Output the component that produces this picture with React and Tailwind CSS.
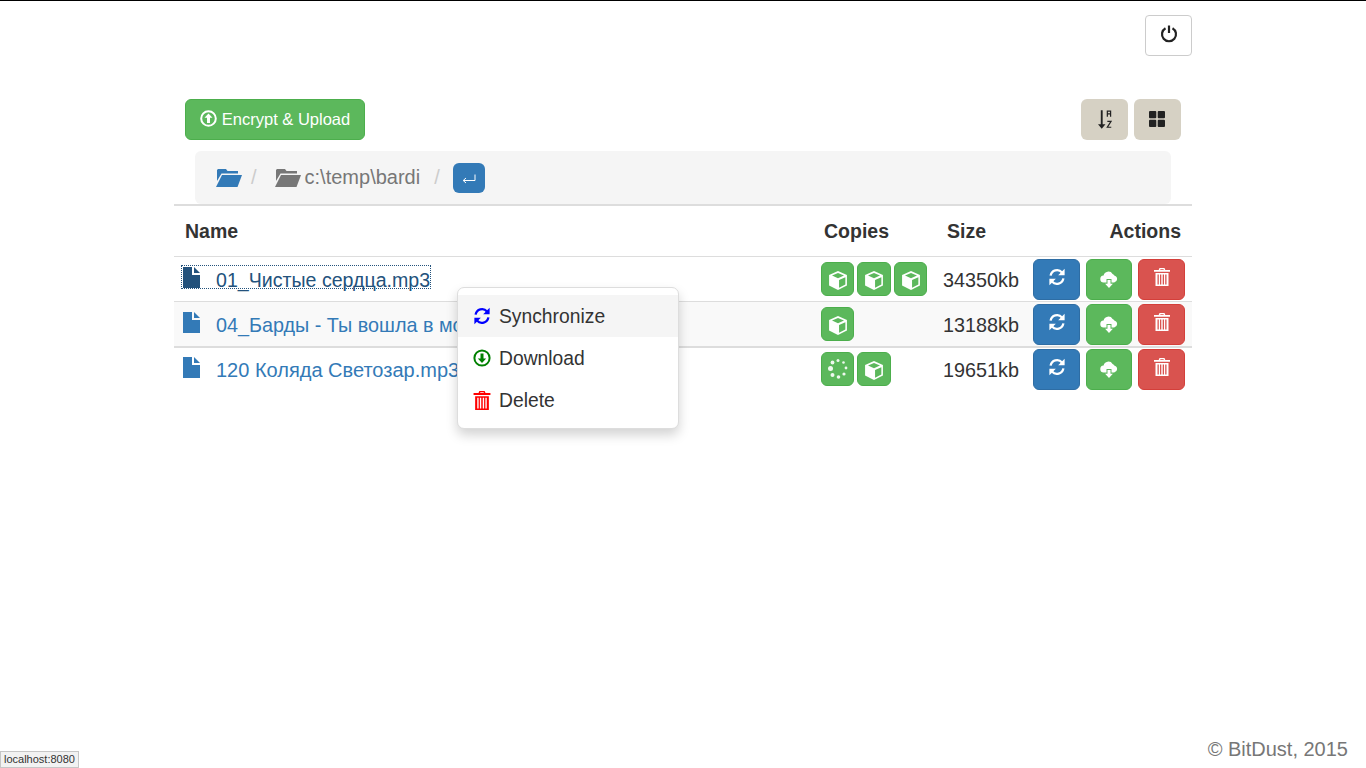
const files = [
  { name: "01_Чистые сердца.mp3", size: "34350kb", copies: ["cube", "cube", "cube"], focused: true, textSize: "text-[19.6px]" },
  { name: "04_Барды - Ты вошла в мою жизнь.mp3", size: "13188kb", copies: ["cube"], striped: true, textSize: "text-[19.8px]" },
  { name: "120 Коляда Светозар.mp3", size: "19651kb", copies: ["spin", "cube"], doubleLine: true, textSize: "text-[20px]" },
];

const spinnerDots = [
  [12, 3.5, 1.5],
  [17.5, 5.5, 1.3],
  [20, 11, 1.4],
  [18, 17, 1.6],
  [12.5, 20, 1.8],
  [6.5, 18, 2],
  [4.5, 11.5, 2.5],
  [6.5, 5.5, 1.9],
];

function FileIcon({ className }) {
  return (
    <svg viewBox="0 0 17 21" className={className} fill="currentColor">
      <path d="M0 0h9v8h8v13H0z" />
      <path d="M11 0l6 6h-6z" />
    </svg>
  );
}

function FolderOpen({ className }) {
  return (
    <svg viewBox="0 0 26 18" className={className} fill="currentColor">
      <path d="M2 0h8l1.500 2H22v2.500H5.500L1 12V1z" />
      <path d="M6 6h20l-4.500 12H0z" />
    </svg>
  );
}

function SyncIcon({ className }) {
  return (
    <svg viewBox="0 0 18 18" className={className} fill="none">
      <path d="M2.600 7.600A6.600 6.600 0 0 1 14 4.400" stroke="currentColor" strokeWidth="2.300" />
      <path d="M16.600 0.800v6.400h-6.400z" fill="currentColor" />
      <path d="M15.400 10.400A6.600 6.600 0 0 1 4 13.600" stroke="currentColor" strokeWidth="2.300" />
      <path d="M1.400 17.200v-6.400h6.400z" fill="currentColor" />
    </svg>
  );
}

function CloudDown({ className }) {
  return (
    <svg viewBox="0 0 18 18" className={className} fill="currentColor">
      <path d="M4 12.500a3.500 3.500 0 0 1-.4-7A4.900 4.900 0 0 1 12.600 4a3.300 3.300 0 0 1 2 1.700 3.500 3.500 0 0 1-.4 6.800H11.500V9H6.500v3.500z" />
      <path d="M7.500 10h3v3.800h2.400L9 18l-3.900-4.200h2.400z" />
    </svg>
  );
}

function TrashIcon({ className }) {
  return (
    <svg viewBox="0 0 16 18" className={className} fill="currentColor">
      <path d="M5.500 0h5l.8 2H16v1.800H0V2h4.700zM6.500 1.200 6.200 2h3.600l-.3-.8z" fillRule="evenodd" />
      <path
        d="M1.500 5h13v13h-13zM3.500 6.500v10h1.300v-10zM6 6.500v10h1.300v-10zM8.700 6.500v10H10v-10zM11.200 6.500v10h1.300v-10z"
        fillRule="evenodd"
      />
    </svg>
  );
}

function CubeIcon() {
  return (
    <svg viewBox="0 0 20 20" className="w-[22px] h-[21px] shrink-0 mt-[2px]">
      <path d="M10 1l8.500 3.800v10L10 19l-8.500-4.200v-10z" fill="#fff" />
      <path d="M10 2.800l5.700 2.500L10 7.800 4.300 5.300z" fill="#5cb85c" />
      <path d="M11 9.500l6-2.700v7.100l-6 3z" fill="#5cb85c" />
    </svg>
  );
}

function SpinnerIcon() {
  return (
    <svg viewBox="0 0 24 24" className="w-[24px] h-[24px] shrink-0" fill="#fff" opacity="0.9">
      {spinnerDots.map(([cx, cy, r]) => (
        <circle key={cx + "-" + cy} cx={cx} cy={cy} r={r} />
      ))}
    </svg>
  );
}

function SortIcon() {
  return (
    <svg viewBox="0 0 15 20" className="w-[14px] h-[19px] -mt-[1px]" fill="none">
      <path d="M3 0h2v15h3l-4 5-4-5h3z" fill="#222" />
      <path d="M10 7V1h3.500v6M10 4h3.500" stroke="#222" strokeWidth="1.300" />
      <path d="M10 12h4l-4 6.300h4.200" stroke="#222" strokeWidth="1.300" />
    </svg>
  );
}

function FileRow({ file }) {
  return (
    <div
      className={`grid grid-cols-[641px_118px_94px_165px] h-[45px] border-t border-[#ddd] ${
        file.striped ? "bg-[#f9f9f9]" : ""
      } ${file.doubleLine ? "shadow-[inset_0_1px_0_#ddd]" : ""}`}
    >
      <div className="pl-[8px] pt-[9px] min-w-0">
        <div
          className={`inline-flex items-start h-[22px] leading-[28px] whitespace-nowrap ${file.textSize} ${
            file.focused
              ? "outline-dotted outline-1 outline-[#23527c] text-[#23527c]"
              : "text-[#337ab7]"
          }`}
        >
          <FileIcon className="w-[17px] h-[21px] ml-[1px] mr-[16px] mt-[1px]" />
          <span>{file.name}</span>
        </div>
      </div>
      <div className="flex gap-[3.1px] pl-[6px] pt-[5px]">
        {file.copies.map((kind, i) => (
          <div
            key={i}
            className="w-[33.4px] h-[34px] rounded-[6px] bg-[#5cb85c] border border-[#4cae4c] flex items-center justify-center"
          >
            {kind === "cube" ? <CubeIcon /> : <SpinnerIcon />}
          </div>
        ))}
      </div>
      <div className="text-[19.8px] leading-[25px] text-[#333] text-right pr-[8px] pt-[11px]">{file.size}</div>
      <div className="flex pl-[6px] pt-[2px]">
        <div className="w-[47px] h-[41px] rounded-[6px] bg-[#337ab7] border border-[#2e6da4] text-white flex items-center justify-center">
          <SyncIcon className="w-[18px] h-[18px] -mt-[5px]" />
        </div>
        <div className="w-[46px] h-[41px] ml-[6px] rounded-[6px] bg-[#5cb85c] border border-[#4cae4c] text-white flex items-center justify-center">
          <CloudDown className="w-[18px] h-[18px] -mt-[2px]" />
        </div>
        <div className="w-[47px] h-[41px] ml-[6px] rounded-[6px] bg-[#d9534f] border border-[#d43f3a] text-white flex items-center justify-center">
          <TrashIcon className="w-[16px] h-[18px] -mt-[5px]" />
        </div>
      </div>
    </div>
  );
}

export default function App() {
  return (
    <div className="relative h-[768px] overflow-hidden bg-white border-t border-black flex flex-col font-['Liberation_Sans',Arial,sans-serif] text-[#333]">
      <div className="w-[1018px] mx-auto">
        {/* power button */}
        <div className="flex justify-end pt-[14px]">
          <div className="w-[47px] h-[41px] bg-white border border-[#ccc] rounded-[4px] flex items-center justify-center">
            <svg viewBox="0 0 18 18" className="w-[18px] h-[18px] -mt-[4px]" fill="none" stroke="#222" strokeWidth="2.200">
              <path d="M5.500 3.200a7 7 0 1 0 7 0" />
              <path d="M9 0.500v7.500" />
            </svg>
          </div>
        </div>

        {/* toolbar */}
        <div className="flex justify-between px-[11px] mt-[43px]">
          <div className="w-[180px] h-[41px] rounded-[6px] bg-[#5cb85c] border border-[#4cae4c] text-white text-[16.500px] flex items-center justify-center">
            <svg viewBox="0 0 17 17" className="w-[17px] h-[17px] mr-[5px] -mt-[3px]" fill="none">
              <circle cx="8.500" cy="8.500" r="7.300" stroke="#fff" strokeWidth="2" />
              <path d="M8.500 3.500l4 4.200h-2.500v5.300H7V7.700H4.500z" fill="#fff" />
            </svg>
            Encrypt &amp; Upload
          </div>
          <div className="flex gap-[6px]">
            <div className="w-[47px] h-[41px] rounded-[6px] bg-[#d6d1c4] flex items-center justify-center">
              <SortIcon />
            </div>
            <div className="w-[47px] h-[41px] rounded-[6px] bg-[#d6d1c4] flex items-center justify-center">
              <svg viewBox="0 0 16 16" className="w-[16px] h-[16px] -ml-[1px] -mt-[1px]" fill="#222">
                <rect x="0" y="0" width="7.300" height="7.300" rx="1" />
                <rect x="8.700" y="0" width="7.300" height="7.300" rx="1" />
                <rect x="0" y="8.700" width="7.300" height="7.300" rx="1" />
                <rect x="8.700" y="8.700" width="7.300" height="7.300" rx="1" />
              </svg>
            </div>
          </div>
        </div>

        {/* breadcrumb */}
        <div className="mx-[21px] mt-[11px] h-[53px] bg-[#f5f5f5] rounded-[6px] flex items-center pl-[21px] text-[20px] leading-[24px] text-[#777]">
          <FolderOpen className="w-[26px] h-[18px] text-[#337ab7]" />
          <span className="ml-[9px] -mt-[2px] text-[#ccc]">/</span>
          <FolderOpen className="w-[26px] h-[18px] ml-[18px]" />
          <span className="ml-[4px] -mt-[2px]">c:\temp\bardi</span>
          <span className="ml-[14px] -mt-[2px] text-[#ccc]">/</span>
          <div className="ml-[13px] w-[32px] h-[30px] rounded-[6px] bg-[#337ab7] flex items-center justify-center">
            <svg viewBox="0 0 14 10" className="w-[14px] h-[10px] mt-[3px]" fill="none" stroke="#fff" strokeWidth="1">
              <path d="M13 0.500v6H1.500" />
              <path d="M4 4L1.200 6.500 4 9" />
            </svg>
          </div>
        </div>

        {/* table head */}
        <div className="grid grid-cols-[641px_118px_94px_165px] h-[52px] border-t-2 border-[#ddd] text-[19.500px] font-bold leading-[25px] pt-[13px]">
          <div className="pl-[11px]">Name</div>
          <div className="pl-[9px]">Copies</div>
          <div className="pl-[14px]">Size</div>
          <div className="text-right pr-[11px]">Actions</div>
        </div>

        {files.map((file) => (
          <FileRow key={file.name} file={file} />
        ))}
      </div>

      {/* footer */}
      <div className="mt-auto text-right pr-[18px] pb-[7px] text-[20px] leading-[24px] text-[#777]">© BitDust, 2015</div>

      {/* context menu */}
      <div className="absolute left-[457px] top-[286px] w-[222px] h-[142px] bg-white border border-[#ddd] rounded-[7px] pt-[7px] shadow-[0_6px_12px_rgba(0,0,0,0.175)] text-[19.300px] leading-[24px] text-[#333]">
        <div className="h-[42px] bg-[#f5f5f5] flex items-center pl-[15px]">
          <SyncIcon className="w-[18px] h-[18px] text-[#0000ff] mr-[8px]" />
          <span className="mt-[2px]">Synchronize</span>
        </div>
        <div className="h-[42px] flex items-center pl-[15px]">
          <svg viewBox="0 0 18 18" className="w-[18px] h-[18px] mr-[8px]" fill="none">
            <circle cx="9" cy="9" r="7.600" stroke="#008000" strokeWidth="2" />
            <path d="M9 14l-4.200-4.400h2.700V4.500h3v5.100h2.700z" fill="#008000" />
          </svg>
          <span className="mt-[2px]">Download</span>
        </div>
        <div className="h-[42px] flex items-center pl-[15px]">
          <TrashIcon className="w-[18px] h-[19px] text-[#ff0000] mr-[8px]" />
          <span className="mt-[2px]">Delete</span>
        </div>
      </div>

      {/* browser status tooltip */}
      <div className="absolute left-0 bottom-0 w-[79px] h-[17px] bg-[#f2f2f2] border border-[#c6c6c6] pl-[3px] text-[11px] leading-[15px] text-[#333] whitespace-nowrap">
        localhost:8080
      </div>
    </div>
  );
}
